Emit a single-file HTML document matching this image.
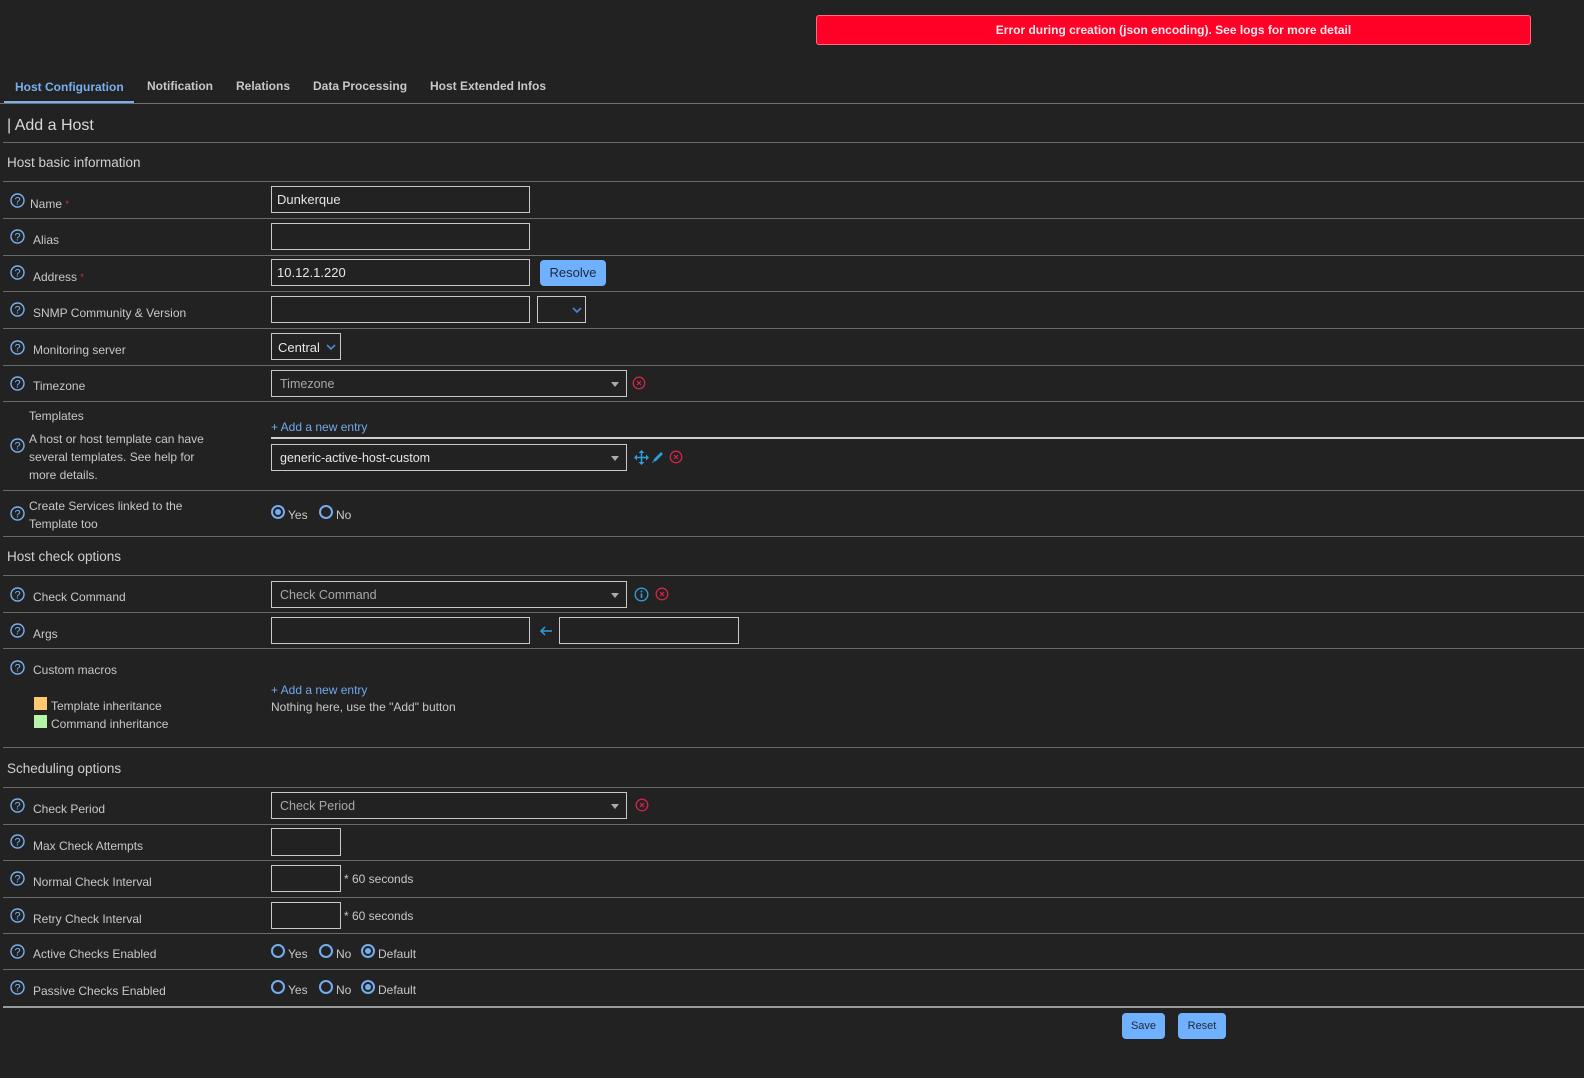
<!DOCTYPE html>
<html><head><meta charset="utf-8">
<style>
*{box-sizing:border-box;margin:0;padding:0}
html,body{width:1584px;height:1078px;background:#222;overflow:hidden;font-family:"Liberation Sans",Arial,sans-serif;color:#c8c8c8}
.a{position:absolute}
.l{position:absolute;left:3px;right:0;height:1px;background:#6a6a6a}
.t{position:absolute;font-size:12px;line-height:16px;color:#c8c8c8;white-space:nowrap}
.h{position:absolute;font-size:13.5px;line-height:18px;color:#d0d0d0;white-space:nowrap}
.in{position:absolute;border:1px solid #c9c9c9;background:#222;height:27px}
.in span{position:absolute;left:5px;top:5px;font-size:13px;color:#e6e6e6}
.sel span{left:8px;top:6px;font-size:12.5px;color:#a8a8a8}
.sel:after{content:"";position:absolute;right:7px;top:11px;border-left:4px solid transparent;border-right:4px solid transparent;border-top:5px solid #aaa}
.q{position:absolute;width:15px;height:15px}
.rad{position:absolute;width:14px;height:14px;border:2px solid #74aef0;border-radius:50%}
.rad.on:after{content:"";position:absolute;left:2px;top:2px;width:6px;height:6px;border-radius:50%;background:#74aef0}
.btn{position:absolute;background:#6fb0ff;border-radius:4px;color:#1b2a3a;text-align:center}
.tab{position:absolute;top:79px;font-size:12px;font-weight:bold;color:#c8c8c8}
.lk{position:absolute;font-size:12px;color:#6fa8ec}
</style></head><body>

<div class="a" style="left:816px;top:15px;width:715px;height:30px;background:#ff0026;border:1px solid #ff6a7f;border-radius:3px;color:#fde8ec;font-size:12px;font-weight:bold;text-align:center;line-height:28px">Error during creation (json encoding). See logs for more detail</div>

<div class="tab" style="left:15px;top:80px;color:#78b0ef">Host Configuration</div>
<div class="a" style="left:4px;top:101px;width:130px;height:3px;background:#78b0ef"></div>
<div class="tab" style="left:147px">Notification</div>
<div class="tab" style="left:236px">Relations</div>
<div class="tab" style="left:313px">Data Processing</div>
<div class="tab" style="left:430px">Host Extended Infos</div>
<div class="a" style="left:0;right:0;top:103px;height:1px;background:#707070"></div>

<div class="a" style="left:7px;top:117px;font-size:16px;color:#d8d8d8">| Add a Host</div>
<div class="l" style="top:142px"></div>
<div class="h" style="left:7px;top:154px">Host basic information</div>
<div class="l" style="top:181px"></div>
<div class="l" style="top:218px"></div>
<div class="l" style="top:255px"></div>
<div class="l" style="top:291px"></div>
<div class="l" style="top:328px"></div>
<div class="l" style="top:365px"></div>
<div class="l" style="top:401px"></div>
<div class="l" style="top:490px"></div>
<div class="l" style="top:536px"></div>
<div class="h" style="left:7px;top:548px">Host check options</div>
<div class="l" style="top:575px"></div>
<div class="l" style="top:612px"></div>
<div class="l" style="top:648px"></div>
<div class="l" style="top:747px"></div>
<div class="h" style="left:7px;top:760px">Scheduling options</div>
<div class="l" style="top:787px"></div>
<div class="l" style="top:824px"></div>
<div class="l" style="top:860px"></div>
<div class="l" style="top:897px"></div>
<div class="l" style="top:933px"></div>
<div class="l" style="top:969px"></div>
<div class="l" style="top:1006px;height:2px;background:#9a9a9a"></div>

<!-- help icons -->
<svg width="0" height="0" style="position:absolute"><defs><g id="q"><circle cx="7.5" cy="7.5" r="6.5" fill="none" stroke="#78b0ef" stroke-width="1.4"/><text x="7.5" y="11.5" text-anchor="middle" font-family="Liberation Sans" font-size="11" fill="#78b0ef">?</text></g></defs></svg>
<svg class="q" style="left:10px;top:193px"><use href="#q"/></svg>
<svg class="q" style="left:10px;top:229px"><use href="#q"/></svg>
<svg class="q" style="left:10px;top:265px"><use href="#q"/></svg>
<svg class="q" style="left:10px;top:302px"><use href="#q"/></svg>
<svg class="q" style="left:10px;top:340px"><use href="#q"/></svg>
<svg class="q" style="left:10px;top:376px"><use href="#q"/></svg>
<svg class="q" style="left:10px;top:438px"><use href="#q"/></svg>
<svg class="q" style="left:10px;top:506px"><use href="#q"/></svg>
<svg class="q" style="left:10px;top:587px"><use href="#q"/></svg>
<svg class="q" style="left:10px;top:623px"><use href="#q"/></svg>
<svg class="q" style="left:10px;top:660px"><use href="#q"/></svg>
<svg class="q" style="left:10px;top:798px"><use href="#q"/></svg>
<svg class="q" style="left:10px;top:834px"><use href="#q"/></svg>
<svg class="q" style="left:10px;top:871px"><use href="#q"/></svg>
<svg class="q" style="left:10px;top:908px"><use href="#q"/></svg>
<svg class="q" style="left:10px;top:944px"><use href="#q"/></svg>
<svg class="q" style="left:10px;top:980px"><use href="#q"/></svg>

<!-- labels -->
<div class="t" style="left:30px;top:196px">Name <span style="color:#d33;font-size:9px;vertical-align:top">*</span></div>
<div class="t" style="left:33px;top:232px">Alias</div>
<div class="t" style="left:33px;top:269px">Address <span style="color:#d33;font-size:9px;vertical-align:top">*</span></div>
<div class="t" style="left:33px;top:305px">SNMP Community &amp; Version</div>
<div class="t" style="left:33px;top:342px">Monitoring server</div>
<div class="t" style="left:33px;top:378px">Timezone</div>
<div class="t" style="left:29px;top:408px">Templates</div>
<div class="t" style="left:29px;top:430px;line-height:18px">A host or host template can have<br>several templates. See help for<br>more details.</div>
<div class="t" style="left:29px;top:497px;line-height:18px">Create Services linked to the<br>Template too</div>
<div class="t" style="left:33px;top:589px">Check Command</div>
<div class="t" style="left:33px;top:626px">Args</div>
<div class="t" style="left:33px;top:662px">Custom macros</div>
<div class="a" style="left:34px;top:697px;width:13px;height:13px;background:#ffc870"></div>
<div class="t" style="left:51px;top:698px">Template inheritance</div>
<div class="a" style="left:34px;top:715px;width:13px;height:13px;background:#b5f5a5"></div>
<div class="t" style="left:51px;top:716px">Command inheritance</div>
<div class="t" style="left:33px;top:801px">Check Period</div>
<div class="t" style="left:33px;top:838px">Max Check Attempts</div>
<div class="t" style="left:33px;top:874px">Normal Check Interval</div>
<div class="t" style="left:33px;top:911px">Retry Check Interval</div>
<div class="t" style="left:33px;top:946px">Active Checks Enabled</div>
<div class="t" style="left:33px;top:983px">Passive Checks Enabled</div>

<!-- inputs -->
<div class="in" style="left:271px;top:186px;width:259px"><span>Dunkerque</span></div>
<div class="in" style="left:271px;top:223px;width:259px"></div>
<div class="in" style="left:271px;top:259px;width:259px"><span>10.12.1.220</span></div>
<div class="btn" style="left:540px;top:260px;width:66px;height:26px;font-size:13px;line-height:26px">Resolve</div>
<div class="in" style="left:271px;top:296px;width:259px"></div>
<div class="in" style="left:537px;top:296px;width:49px"><svg class="a" style="left:34px;top:10px" width="10" height="7"><path d="M1 1l4 4 4-4" stroke="#4f86d0" stroke-width="1.6" fill="none"/></svg></div>
<div class="in" style="left:271px;top:333px;width:70px"><span style="left:6px;top:6px">Central</span><svg class="a" style="left:54px;top:10px" width="10" height="7"><path d="M1 1l4 4 4-4" stroke="#4f86d0" stroke-width="1.6" fill="none"/></svg></div>

<div class="in sel" style="left:271px;top:370px;width:356px"><span>Timezone</span></div>
<svg class="a" style="left:632px;top:376px" width="14" height="14"><circle cx="7" cy="7" r="5.8" fill="none" stroke="#d0264a" stroke-width="1.3"/><path d="M5 5l4 4M9 5l-4 4" stroke="#d0264a" stroke-width="1.2"/></svg>

<div class="lk" style="left:271px;top:420px">+ Add a new entry</div>
<div class="a" style="left:271px;right:0;top:437px;height:2px;background:#cfcfcf"></div>
<div class="in sel" style="left:271px;top:444px;width:356px"><span style="color:#e6e6e6">generic-active-host-custom</span></div>
<svg class="a" style="left:634px;top:450px" width="15" height="15" viewBox="0 0 15 15"><path d="M7.5 1v13M1 7.5h13" stroke="#2d9ed8" stroke-width="1.5"/><path d="M7.5 0l-3 3h6zM7.5 15l-3-3h6zM0 7.5l3-3v6zM15 7.5l-3-3v6z" fill="#2d9ed8"/></svg>
<svg class="a" style="left:651px;top:450px" width="14" height="14" viewBox="0 0 14 14"><path d="M2 12l1-3 7-7 2 2-7 7z" fill="#2d9ed8"/><path d="M1 13l1.5-0.5L1.5 11.5z" fill="#2d9ed8"/></svg>
<svg class="a" style="left:669px;top:450px" width="14" height="14"><circle cx="7" cy="7" r="5.8" fill="none" stroke="#d0264a" stroke-width="1.3"/><path d="M5 5l4 4M9 5l-4 4" stroke="#d0264a" stroke-width="1.2"/></svg>

<div class="rad on" style="left:271px;top:505px"></div>
<div class="t" style="left:288px;top:507px">Yes</div>
<div class="rad" style="left:319px;top:505px"></div>
<div class="t" style="left:336px;top:507px">No</div>

<div class="in sel" style="left:271px;top:581px;width:356px"><span>Check Command</span></div>
<svg class="a" style="left:634px;top:587px" width="15" height="15"><circle cx="7.5" cy="7.5" r="6.3" fill="none" stroke="#2d9ed8" stroke-width="1.4"/><circle cx="7.5" cy="4.5" r="1" fill="#2d9ed8"/><path d="M7.5 6.5v4.5" stroke="#2d9ed8" stroke-width="1.6"/></svg>
<svg class="a" style="left:655px;top:587px" width="14" height="14"><circle cx="7" cy="7" r="5.8" fill="none" stroke="#d0264a" stroke-width="1.3"/><path d="M5 5l4 4M9 5l-4 4" stroke="#d0264a" stroke-width="1.2"/></svg>

<div class="in" style="left:271px;top:617px;width:259px"></div>
<svg class="a" style="left:539px;top:626px" width="14" height="10"><path d="M13 5H2M6 1L2 5l4 4" stroke="#2d9ed8" stroke-width="1.5" fill="none"/></svg>
<div class="in" style="left:559px;top:617px;width:180px"></div>

<div class="lk" style="left:271px;top:683px">+ Add a new entry</div>
<div class="t" style="left:271px;top:699px">Nothing here, use the "Add" button</div>

<div class="in sel" style="left:271px;top:792px;width:356px"><span>Check Period</span></div>
<svg class="a" style="left:635px;top:798px" width="14" height="14"><circle cx="7" cy="7" r="5.8" fill="none" stroke="#d0264a" stroke-width="1.3"/><path d="M5 5l4 4M9 5l-4 4" stroke="#d0264a" stroke-width="1.2"/></svg>

<div class="in" style="left:271px;top:828px;width:70px;height:28px"></div>
<div class="in" style="left:271px;top:865px;width:70px;height:27px"></div>
<div class="t" style="left:344px;top:871px">* 60 seconds</div>
<div class="in" style="left:271px;top:902px;width:70px;height:27px"></div>
<div class="t" style="left:344px;top:908px">* 60 seconds</div>

<div class="rad" style="left:271px;top:944px"></div><div class="t" style="left:288px;top:946px">Yes</div>
<div class="rad" style="left:319px;top:944px"></div><div class="t" style="left:336px;top:946px">No</div>
<div class="rad on" style="left:361px;top:944px"></div><div class="t" style="left:378px;top:946px">Default</div>

<div class="rad" style="left:271px;top:980px"></div><div class="t" style="left:288px;top:982px">Yes</div>
<div class="rad" style="left:319px;top:980px"></div><div class="t" style="left:336px;top:982px">No</div>
<div class="rad on" style="left:361px;top:980px"></div><div class="t" style="left:378px;top:982px">Default</div>

<div class="btn" style="left:1122px;top:1013px;width:43px;height:26px;font-size:11px;line-height:26px">Save</div>
<div class="btn" style="left:1178px;top:1013px;width:48px;height:26px;font-size:11px;line-height:26px">Reset</div>

</body></html>
